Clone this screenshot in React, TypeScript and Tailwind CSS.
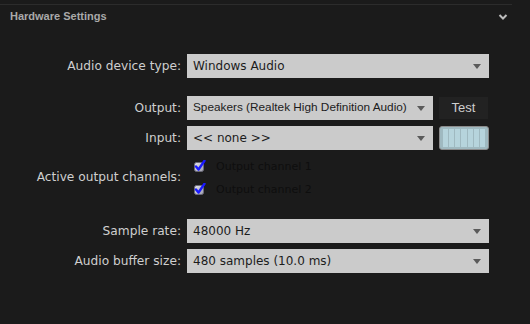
import React from "react";

const verdana = { fontFamily: '"DejaVu Sans", Verdana, sans-serif' };
const segoe = { fontFamily: '"Liberation Sans", Arial, sans-serif' };

function Arrow() {
  return (
    <svg width="8" height="5" viewBox="0 0 8 5" className="shrink-0">
      <path d="M0 0 L8 0 L4 5 Z" fill="#5a5a5a" />
    </svg>
  );
}

function Select({ text, font = verdana, className = "", size = "text-[12px]" }: { text: string; font?: React.CSSProperties; className?: string; size?: string }) {
  return (
    <div className={`flex h-[24px] items-center justify-between bg-[#cbcbcb] pl-[6px] pr-[8px] text-[#1c1c1c] ${className}`}>
      <span className={`${size} whitespace-nowrap leading-none`} style={font}>{text}</span>
      <Arrow />
    </div>
  );
}

function Label({ children }: { children: React.ReactNode }) {
  return (
    <div className="w-[181px] shrink-0 whitespace-nowrap text-right text-[12.2px] leading-none text-[#cfcfcf]" style={verdana}>
      {children}
    </div>
  );
}

function Check() {
  return (
    <svg width="12" height="13" viewBox="0 0 12 13" className="shrink-0">
      <defs>
        <linearGradient id="cb" x1="0" y1="0" x2="1" y2="1">
          <stop offset="0" stopColor="#e8e8f0" />
          <stop offset="1" stopColor="#9a9aa8" />
        </linearGradient>
      </defs>
      <rect x="0.5" y="2.5" width="9" height="9" rx="2" fill="url(#cb)" stroke="#6a6a78" />
      <path d="M2 6.5 L4.5 9.5 L10.5 0.8" stroke="#1a1aff" strokeWidth="2.4" fill="none" strokeLinecap="round" strokeLinejoin="round" />
    </svg>
  );
}

function Meter() {
  return (
    <div className="flex h-[24px] w-[50px] items-stretch gap-[1px] rounded-[3px] border border-[#8c8c8c] bg-[#9fb9c0] px-[3px] py-[2px]">
      {Array.from({ length: 7 }).map((_, i) => (
        <div key={i} className="flex-1 bg-[#b6d4dc]" />
      ))}
    </div>
  );
}

export default function App() {
  return (
    <div className="h-[324px] w-[530px] overflow-hidden bg-[#1b1b1b]">
      <div className="mt-[4px] h-[1px] w-[512px] bg-[#2c2c2c]" />
      <div className="flex h-[23px] w-[512px] items-center justify-between pl-[10px] pr-[4px]">
        <span className="text-[11px] font-bold text-[#a9a9a9]" style={{ fontFamily: '"Liberation Sans", Arial, sans-serif' }}>
          Hardware Settings
        </span>
        <svg width="10" height="8" viewBox="0 0 10 8">
          <path d="M1.5 2 L5 5.5 L8.5 2" stroke="#bdbdbd" strokeWidth="2" fill="none" />
        </svg>
      </div>

      <div className="mt-[26px] flex flex-col">
        <div className="flex items-center gap-[6px]">
          <Label>Audio device type:</Label>
          <Select text="Windows Audio" className="w-[302px]" />
        </div>

        <div className="mt-[18px] flex items-center gap-[6px]">
          <Label>Output:</Label>
          <Select text="Speakers (Realtek High Definition Audio)" font={segoe} size="text-[11.8px]" className="w-[246px]" />
          <div className="flex h-[22px] w-[49px] items-center justify-center bg-[#222222] text-[13px] text-[#cfcfcf]" style={segoe}>
            Test
          </div>
        </div>

        <div className="mt-[6px] flex items-center gap-[6px]">
          <Label>Input:</Label>
          <Select text="<< none >>" className="w-[246px]" />
          <Meter />
        </div>

        <div className="mt-[9px] flex items-center gap-[13px]">
          <Label>Active output channels:</Label>
          <div className="flex flex-col gap-[10px] pt-[1px]">
            <div className="flex items-center gap-[10px]">
              <Check />
              <span className="text-[11px] leading-none text-[#0e0e0e]" style={verdana}>Output channel 1</span>
            </div>
            <div className="flex items-center gap-[10px]">
              <Check />
              <span className="text-[11px] leading-none text-[#0e0e0e]" style={verdana}>Output channel 2</span>
            </div>
          </div>
        </div>

        <div className="mt-[23px] flex items-center gap-[6px]">
          <Label>Sample rate:</Label>
          <Select text="48000 Hz" className="w-[302px]" />
        </div>

        <div className="mt-[6px] flex items-center gap-[6px]">
          <Label>Audio buffer size:</Label>
          <Select text="480 samples (10.0 ms)" className="w-[302px]" />
        </div>
      </div>
    </div>
  );
}
